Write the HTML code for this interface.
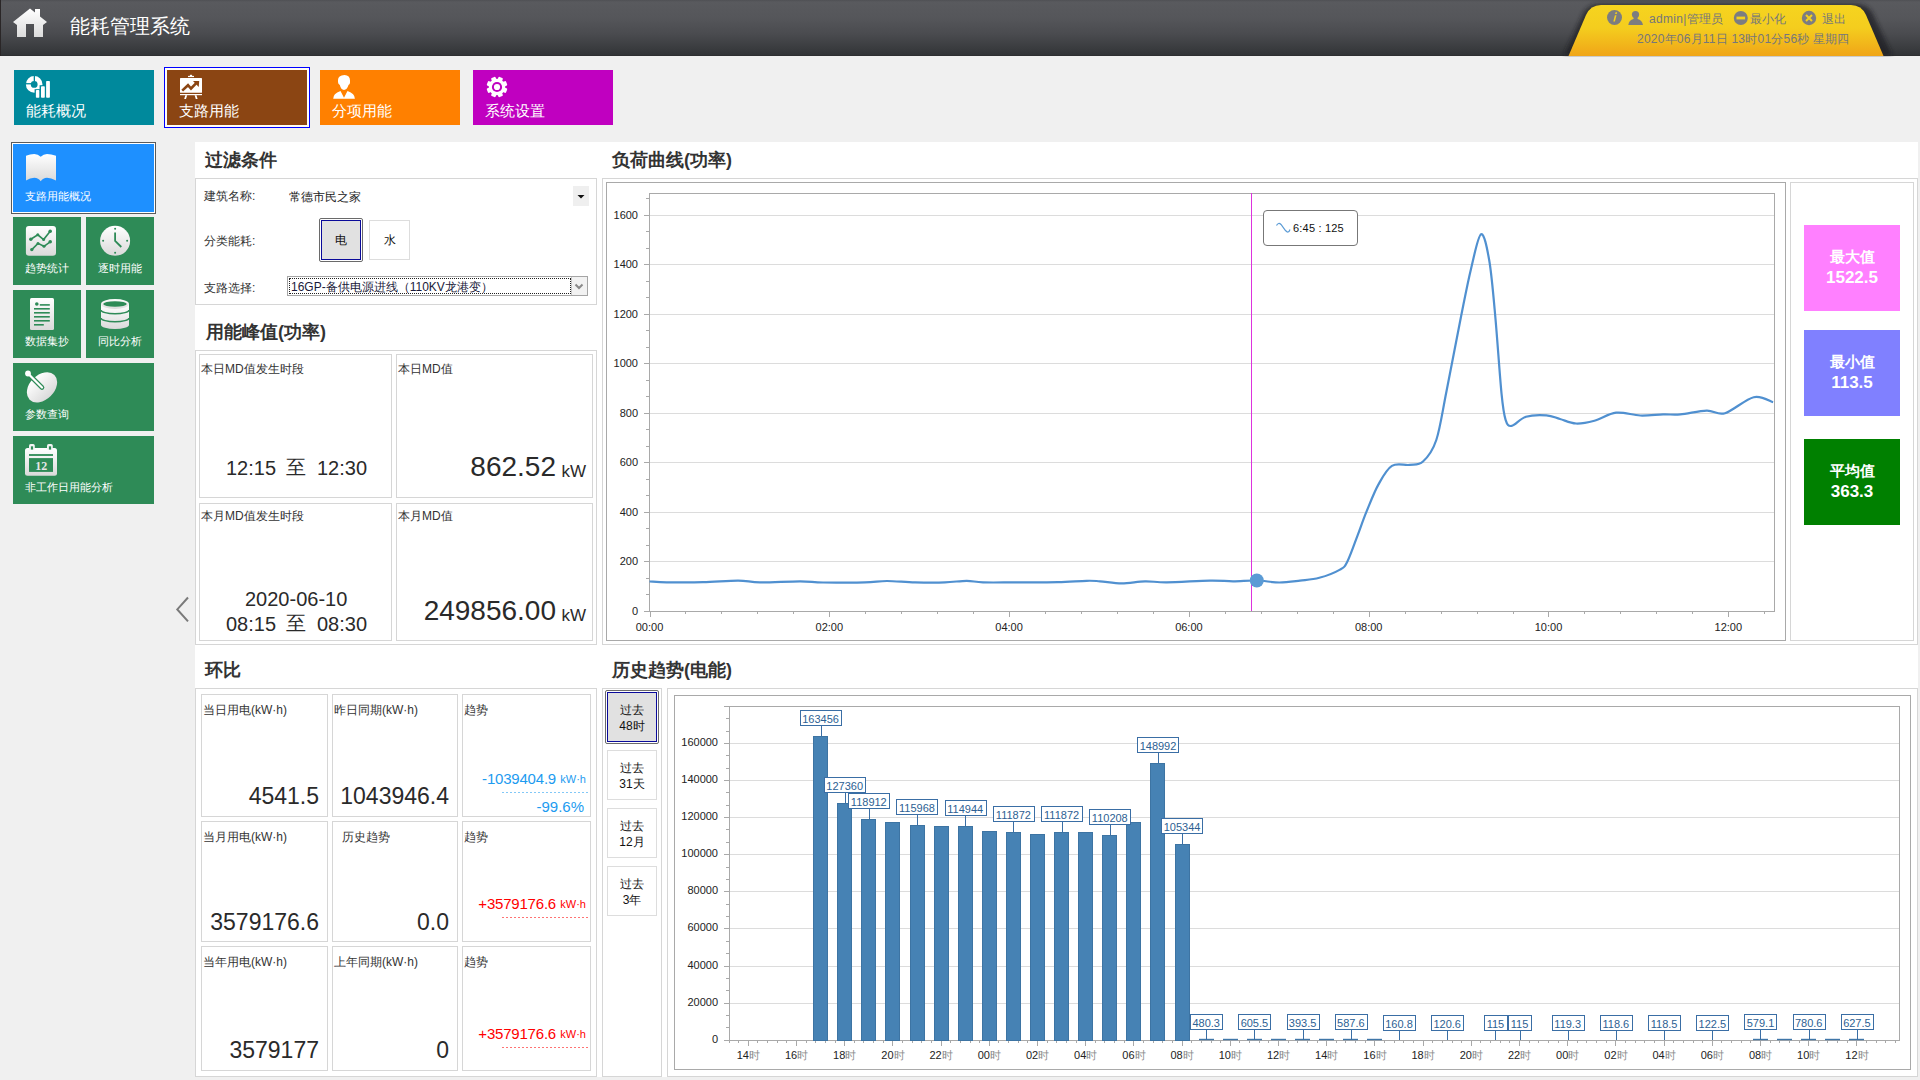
<!DOCTYPE html>
<html><head><meta charset="utf-8"><title>能耗管理系统</title>
<style>
html,body{margin:0;padding:0;}
body{width:1920px;height:1080px;overflow:hidden;position:relative;background:#f0f0f0;font-family:"Liberation Sans", sans-serif;}
svg text{font-family:"Liberation Sans", sans-serif;}
</style></head><body>
<div style="position:absolute;left:0px;top:0px;width:1920px;height:55px;background:linear-gradient(#4f5054 0px,#595a5e 2px,#55565a 18px,#4a4b4f 34px,#3a3c3f 48px,#323437 55px);"></div><div style="position:absolute;left:0px;top:55px;width:1920px;height:1px;background:#2e2f31;"></div><div style="position:absolute;left:0px;top:0px;width:1px;height:56px;background:#2a2627;"></div><svg style="position:absolute;left:0;top:0" width="60" height="50">
<defs><linearGradient id="hg" x1="0" y1="0" x2="0" y2="1"><stop offset="0" stop-color="#ffffff"/><stop offset="1" stop-color="#dcdcdc"/></linearGradient></defs>
<path d="M13,22 L30,8.5 L35,12.5 L35,9 L40,9 L40,16.5 L47,22 L43,25 L43,37 L34,37 L34,24 L26,24 L26,37 L17,37 L17,25 Z" fill="url(#hg)"/>
</svg><div style="position:absolute;left:70px;top:16px;font-size:20px;line-height:20px;color:#ffffff;font-weight:normal;white-space:nowrap;">能耗管理系统</div><svg style="position:absolute;left:1540px;top:0" width="380" height="57">
<defs><linearGradient id="yg" x1="0" y1="0" x2="0" y2="1"><stop offset="0" stop-color="#f6d41f"/><stop offset="0.45" stop-color="#f4cd1e"/><stop offset="1" stop-color="#f0a518"/></linearGradient>
<filter id="ysh" x="-10%" y="-20%" width="120%" height="140%"><feGaussianBlur stdDeviation="2"/></filter></defs>
<path d="M24,55 L43,14 Q48,4 60,4 L316,4 Q328,4 333,14 L352,55 Z" fill="#1e1f22" opacity="0.7" filter="url(#ysh)"/>
<path d="M28.5,56 L46,15 Q50.5,5 61,5 L311,5 Q321.5,5 326,15 L343.5,56 Z" fill="url(#yg)"/>
</svg><svg style="position:absolute;left:1600px;top:5px" width="260" height="25">
<circle cx="14.5" cy="12.5" r="7.5" fill="#7c7d80"/>
<path d="M15.6,7.2 l1.6,0 l-0.5,1.8 l-1.6,0 z M14.9,10.2 l1.6,0 l-1.6,6.4 l-1.6,0 z" fill="#f3d01e"/>
<circle cx="35.5" cy="9.5" r="3.6" fill="#7c7d80"/>
<path d="M28.3,20 Q29,15 33.5,14 L37.5,14 Q42,15 43,20 Z" fill="#7c7d80"/>
<rect x="33.6" y="11" width="4" height="4" fill="#7c7d80"/>
<circle cx="140.8" cy="13" r="7" fill="#7c7d80"/>
<rect x="136.5" y="11.6" width="8.6" height="2.8" fill="#f3d01e"/>
<circle cx="209" cy="13" r="7.2" fill="#7c7d80"/>
<path d="M206,10 L212,16 M212,10 L206,16" stroke="#f3d01e" stroke-width="2"/>
</svg><div style="position:absolute;left:1649px;top:13px;font-size:12px;line-height:12px;color:#76777b;font-weight:normal;white-space:nowrap;letter-spacing:0.3px">admin|管理员</div><div style="position:absolute;left:1750px;top:13px;font-size:12px;line-height:12px;color:#76777b;font-weight:normal;white-space:nowrap;">最小化</div><div style="position:absolute;left:1822px;top:13px;font-size:12px;line-height:12px;color:#76777b;font-weight:normal;white-space:nowrap;">退出</div><div style="position:absolute;left:1637px;top:33px;font-size:12px;line-height:12px;color:#76777b;font-weight:normal;white-space:nowrap;letter-spacing:0.22px">2020年06月11日 13时01分56秒 星期四</div><div style="position:absolute;left:14px;top:70px;width:140px;height:55px;background:#00899c;"></div><svg style="position:absolute;left:14px;top:70px" width="60" height="32">
<circle cx="20.2" cy="14.4" r="5.85" fill="none" stroke="#fff" stroke-width="4.9"/>
<rect x="19.7" y="5" width="1.3" height="6.5" fill="#00899c"/>
<rect x="11" y="13.1" width="6.6" height="1.3" fill="#00899c"/>
<rect x="20.6" y="19.2" width="5.6" height="9" fill="#00899c"/>
<rect x="21.9" y="20.1" width="3.6" height="7.6" rx="0.8" fill="#fff"/>
<rect x="25.6" y="15.2" width="5.6" height="13" fill="#00899c"/>
<rect x="27" y="16.3" width="3.8" height="11.4" rx="0.8" fill="#fff"/>
<rect x="32.1" y="11" width="3.8" height="16.7" rx="0.8" fill="#fff"/>
</svg><div style="position:absolute;left:26px;top:103px;font-size:15px;line-height:15px;color:#ffffff;font-weight:normal;white-space:nowrap;">能耗概况</div><div style="position:absolute;left:164px;top:67px;width:144px;height:59px;border:1px solid #0000ff;box-sizing:content-box;background:#fffdf6;"></div><div style="position:absolute;left:167px;top:70px;width:140px;height:55px;background:#8b4513;"></div><svg style="position:absolute;left:167px;top:70px" width="60" height="32">
<rect x="21" y="5.9" width="6" height="1.2" fill="#fff"/>
<rect x="22.9" y="4.8" width="2.2" height="1.3" fill="#fff"/>
<rect x="13" y="8" width="22" height="14.8" rx="0.6" fill="#fff"/>
<path d="M15.2,20.6 L21,15.2 L24,18.5 L29.5,12.8" stroke="#8b4513" stroke-width="2.6" fill="none"/>
<path d="M26,11 L32.2,10.9 L31.7,17 Z" fill="#8b4513"/>
<rect x="13" y="24" width="22" height="1.2" fill="#fff"/>
<path d="M18.3,25.2 L20.2,25.2 L19,28.9 L17.2,28.9 Z M27.6,25.2 L29.5,25.2 L30.6,28.9 L28.8,28.9 Z" fill="#fff"/>
</svg><div style="position:absolute;left:179px;top:103px;font-size:15px;line-height:15px;color:#ffffff;font-weight:normal;white-space:nowrap;">支路用能</div><div style="position:absolute;left:320px;top:70px;width:140px;height:55px;background:#ff8000;"></div><svg style="position:absolute;left:320px;top:70px" width="60" height="32">
<path d="M24.5,4.9 Q30,5 30,10.5 L30,12.5 Q30,14 28.5,15 Q27,19.9 24,19.9 Q21,19.9 19.8,15 Q18,14 18,12 L18,10 Q18,5.5 24.5,4.9 Z" fill="#fff"/>
<path d="M13.2,28.8 Q13,23.5 20.5,20.9 L24,27.8 L27.5,20.9 Q35,23.5 34.9,28.8 Z" fill="#fff"/>
</svg><div style="position:absolute;left:332px;top:103px;font-size:15px;line-height:15px;color:#ffffff;font-weight:normal;white-space:nowrap;">分项用能</div><div style="position:absolute;left:473px;top:70px;width:140px;height:55px;background:#c000c0;"></div><svg style="position:absolute;left:473px;top:70px" width="60" height="32">
<g transform="translate(24,17)">
<circle r="8.3" fill="#fff"/>
<g fill="#fff"><rect x="-2.4" y="-10.4" width="4.8" height="4" rx="1.1" transform="rotate(22.5)"/><rect x="-2.4" y="-10.4" width="4.8" height="4" rx="1.1" transform="rotate(67.5)"/><rect x="-2.4" y="-10.4" width="4.8" height="4" rx="1.1" transform="rotate(112.5)"/><rect x="-2.4" y="-10.4" width="4.8" height="4" rx="1.1" transform="rotate(157.5)"/><rect x="-2.4" y="-10.4" width="4.8" height="4" rx="1.1" transform="rotate(202.5)"/><rect x="-2.4" y="-10.4" width="4.8" height="4" rx="1.1" transform="rotate(247.5)"/><rect x="-2.4" y="-10.4" width="4.8" height="4" rx="1.1" transform="rotate(292.5)"/><rect x="-2.4" y="-10.4" width="4.8" height="4" rx="1.1" transform="rotate(337.5)"/></g>
<circle r="5.1" fill="#c000c0"/>
<circle r="3.1" fill="#fff"/>
</g>
</svg><div style="position:absolute;left:485px;top:103px;font-size:15px;line-height:15px;color:#ffffff;font-weight:normal;white-space:nowrap;">系统设置</div><div style="position:absolute;left:11px;top:142px;width:143px;height:70px;border:1px solid #5a5a5a;box-sizing:border-box;width:145px;height:72px;background:#fff;"></div><div style="position:absolute;left:13px;top:144px;width:141px;height:68px;background:#1e90ff;"></div><svg style="position:absolute;left:13px;top:144px" width="60" height="45">
<defs><linearGradient id="wg" x1="0" y1="0" x2="0" y2="1"><stop offset="0" stop-color="#ffffff"/><stop offset="1" stop-color="#dadada"/></linearGradient></defs>
<path d="M13,11.8 Q17,10 21.3,10 Q25,10 27.7,12.8 Q30.5,10 34,10 Q38,10 43,11.8 L43,36.4 Q38,33.8 34,33.8 Q30,33.8 27.7,37.3 Q25.5,33.8 21.3,33.8 Q17,33.8 13,36.4 Z" fill="url(#wg)"/>
</svg><div style="position:absolute;left:25px;top:191px;font-size:11px;line-height:11px;color:#ffffff;font-weight:normal;white-space:nowrap;">支路用能概况</div><div style="position:absolute;left:13px;top:217px;width:68px;height:68px;background:#2e8b57;"></div><svg style="position:absolute;left:13px;top:217px" width="60" height="45">
<rect x="12.9" y="8.9" width="30.1" height="29.9" rx="3" fill="url(#wg)"/>
<g stroke="#2e8b57" stroke-width="1.6" fill="none"><path d="M17.8,22.2 L24.8,17.8 L30.6,22.6 L37.2,14.2"/><path d="M18.8,32.6 L25,26.4 L31,29.3 L37.2,24.8"/></g>
<g fill="#2e8b57"><circle cx="17.8" cy="22.2" r="1.7"/><circle cx="24.8" cy="17.8" r="1.5"/><circle cx="30.6" cy="22.6" r="1.5"/><circle cx="37.2" cy="14.2" r="1.8"/><circle cx="18.8" cy="32.6" r="1.7"/><circle cx="25" cy="26.4" r="1.5"/><circle cx="31" cy="29.3" r="1.5"/><circle cx="37.2" cy="24.8" r="1.8"/></g>
</svg><div style="position:absolute;left:25px;top:263px;font-size:11px;line-height:11px;color:#ffffff;font-weight:normal;white-space:nowrap;">趋势统计</div><div style="position:absolute;left:86px;top:217px;width:68px;height:68px;background:#2e8b57;"></div><svg style="position:absolute;left:86px;top:217px" width="60" height="45">
<circle cx="29.1" cy="23.8" r="15" fill="url(#wg)"/>
<g fill="#2e8b57"><circle cx="29.1" cy="11.8" r="1"/><circle cx="29.1" cy="35.8" r="1"/><circle cx="17.1" cy="23.8" r="1"/><circle cx="41.1" cy="23.8" r="1"/></g>
<path d="M29.1,15.4 L29.1,23.9 L35.3,30" stroke="#2e8b57" stroke-width="1.8" fill="none"/>
</svg><div style="position:absolute;left:98px;top:263px;font-size:11px;line-height:11px;color:#ffffff;font-weight:normal;white-space:nowrap;">逐时用能</div><div style="position:absolute;left:13px;top:290px;width:68px;height:68px;background:#2e8b57;"></div><svg style="position:absolute;left:13px;top:290px" width="60" height="45">
<rect x="17" y="8" width="24" height="32" rx="1.5" fill="url(#wg)"/>
<circle cx="23.8" cy="14" r="1.8" fill="#2e8b57"/>
<g fill="#2e8b57"><rect x="26.8" y="14.1" width="10" height="1.6"/><rect x="21" y="18" width="15.8" height="1.6"/><rect x="21" y="22" width="15.8" height="1.6"/><rect x="21" y="26" width="15.8" height="1.6"/><rect x="21" y="30" width="15.8" height="1.6"/><rect x="21" y="34" width="9.8" height="1.6"/></g>
</svg><div style="position:absolute;left:25px;top:336px;font-size:11px;line-height:11px;color:#ffffff;font-weight:normal;white-space:nowrap;">数据集抄</div><div style="position:absolute;left:86px;top:290px;width:68px;height:68px;background:#2e8b57;"></div><svg style="position:absolute;left:86px;top:290px" width="60" height="45">
<path d="M15,14 L15,34.9 A14,4 0 0 0 43,34.9 L43,14 Z" fill="url(#wg)"/>
<ellipse cx="29" cy="14" rx="14" ry="5" fill="url(#wg)"/>
<ellipse cx="29" cy="14" rx="11.8" ry="2.8" fill="#2e8b57"/>
<path d="M15,19.9 A14,3.9 0 0 0 43,19.9 M15,27.9 A14,3.9 0 0 0 43,27.9" stroke="#2e8b57" stroke-width="1.4" fill="none"/>
</svg><div style="position:absolute;left:98px;top:336px;font-size:11px;line-height:11px;color:#ffffff;font-weight:normal;white-space:nowrap;">同比分析</div><div style="position:absolute;left:13px;top:363px;width:141px;height:68px;background:#2e8b57;"></div><svg style="position:absolute;left:13px;top:363px" width="60" height="45">
<ellipse cx="29" cy="24.3" rx="17.5" ry="12.3" transform="rotate(-45 29 24.3)" fill="url(#wg)"/>
<path d="M15.5,11 L29,24.5" stroke="#2e8b57" stroke-width="4.6" stroke-linecap="round"/>
<path d="M15.5,11 L29,24.5" stroke="#ffffff" stroke-width="2.2" stroke-linecap="round"/>
<circle cx="15" cy="10.5" r="2.9" fill="#fff"/>
</svg><div style="position:absolute;left:25px;top:409px;font-size:11px;line-height:11px;color:#ffffff;font-weight:normal;white-space:nowrap;">参数查询</div><div style="position:absolute;left:13px;top:436px;width:141px;height:68px;background:#2e8b57;"></div><svg style="position:absolute;left:13px;top:436px" width="60" height="45">
<rect x="12" y="12" width="32" height="27.8" rx="2.5" fill="url(#wg)"/>
<rect x="16" y="18.1" width="24" height="1.8" fill="#2e8b57"/>
<rect x="16" y="22.1" width="24" height="13.8" fill="#2e8b57"/>
<rect x="16" y="8.1" width="5.8" height="6" rx="1.6" fill="#f4f4f4"/>
<rect x="17.9" y="10.3" width="2.2" height="3.3" fill="#2e8b57"/>
<rect x="34" y="8.1" width="5.8" height="6" rx="1.6" fill="#f4f4f4"/>
<rect x="35.9" y="10.3" width="2.2" height="3.3" fill="#2e8b57"/>
<text x="28.2" y="33.8" font-size="12" font-weight="bold" fill="#e6e6e6" text-anchor="middle" style="font-family:'Liberation Serif',serif">12</text>
</svg><div style="position:absolute;left:25px;top:482px;font-size:11px;line-height:11px;color:#ffffff;font-weight:normal;white-space:nowrap;">非工作日用能分析</div><svg style="position:absolute;left:170px;top:590px" width="25" height="40">
<path d="M18,7.5 L7.3,19.4 L18,31.4" stroke="#7a7a7a" stroke-width="2" fill="none"/>
</svg><div style="position:absolute;left:195px;top:142px;width:1723px;height:935px;background:#ffffff;"></div><div style="position:absolute;left:205px;top:151px;font-size:18px;line-height:18px;color:#333333;font-weight:bold;white-space:nowrap;">过滤条件</div><div style="position:absolute;left:206px;top:323px;font-size:18px;line-height:18px;color:#333333;font-weight:bold;white-space:nowrap;">用能峰值(功率)</div><div style="position:absolute;left:205px;top:661px;font-size:18px;line-height:18px;color:#333333;font-weight:bold;white-space:nowrap;">环比</div><div style="position:absolute;left:612px;top:151px;font-size:18px;line-height:18px;color:#333333;font-weight:bold;white-space:nowrap;">负荷曲线(功率)</div><div style="position:absolute;left:612px;top:661px;font-size:18px;line-height:18px;color:#333333;font-weight:bold;white-space:nowrap;">历史趋势(电能)</div><div style="position:absolute;left:195px;top:178px;width:402px;height:127px;box-sizing:border-box;border:1px solid #d6d6d6;"></div><div style="position:absolute;left:204px;top:190px;font-size:12px;line-height:12px;color:#333;font-weight:normal;white-space:nowrap;">建筑名称:</div><div style="position:absolute;left:289px;top:191px;font-size:12px;line-height:12px;color:#222;font-weight:normal;white-space:nowrap;">常德市民之家</div><div style="position:absolute;left:573px;top:186px;width:16px;height:20px;background:#efefef;"></div><svg style="position:absolute;left:573px;top:186px" width="16" height="20"><path d="M4.5,9 L11.5,9 L8,12.5 Z" fill="#111"/></svg><div style="position:absolute;left:204px;top:235px;font-size:12px;line-height:12px;color:#333;font-weight:normal;white-space:nowrap;">分类能耗:</div><div style="position:absolute;left:319px;top:218px;width:44px;height:44px;box-sizing:border-box;border:1px solid #6a6a6a;border-radius:2px;background:#fff;"></div><div style="position:absolute;left:321px;top:220px;width:40px;height:40px;box-sizing:border-box;border:1px solid #0a0a9a;background:#e1e1e1;"></div><div style="position:absolute;left:321.0px;top:234px;width:40px;font-size:12px;line-height:12px;color:#111;font-weight:normal;white-space:nowrap;text-align:center;">电</div><div style="position:absolute;left:369px;top:220px;width:41px;height:40px;box-sizing:border-box;border:1px solid #dddddd;background:#fff;"></div><div style="position:absolute;left:369.5px;top:234px;width:40px;font-size:12px;line-height:12px;color:#111;font-weight:normal;white-space:nowrap;text-align:center;">水</div><div style="position:absolute;left:204px;top:282px;font-size:12px;line-height:12px;color:#333;font-weight:normal;white-space:nowrap;">支路选择:</div><div style="position:absolute;left:287px;top:276px;width:301px;height:20px;box-sizing:border-box;border:1px solid #a5a5a5;background:#fff;"></div><div style="position:absolute;left:289px;top:278px;width:282px;height:16px;box-sizing:border-box;border:1px dotted #222;"></div><div style="position:absolute;left:571px;top:277px;width:16px;height:18px;box-sizing:border-box;border-left:1px solid #c8c8c8;background:#f2f2f2;"></div><svg style="position:absolute;left:571px;top:277px" width="16" height="18"><path d="M4.5,7.5 L8,11 L11.5,7.5" stroke="#8a8a8a" stroke-width="2" fill="none"/></svg><div style="position:absolute;left:291px;top:281px;font-size:12px;line-height:12px;color:#1a1a3a;font-weight:normal;white-space:nowrap;">16GP-备供电源进线（110KV龙港变）</div><div style="position:absolute;left:195px;top:350px;width:402px;height:295px;box-sizing:border-box;border:1px solid #d6d6d6;"></div><div style="position:absolute;left:199px;top:354px;width:193px;height:144px;box-sizing:border-box;border:1px solid #d6d6d6;"></div><div style="position:absolute;left:396px;top:354px;width:197px;height:144px;box-sizing:border-box;border:1px solid #d6d6d6;"></div><div style="position:absolute;left:199px;top:503px;width:193px;height:138px;box-sizing:border-box;border:1px solid #d6d6d6;"></div><div style="position:absolute;left:396px;top:503px;width:197px;height:138px;box-sizing:border-box;border:1px solid #d6d6d6;"></div><div style="position:absolute;left:201px;top:363px;font-size:12px;line-height:12px;color:#333;font-weight:normal;white-space:nowrap;">本日MD值发生时段</div><div style="position:absolute;left:398px;top:363px;font-size:12px;line-height:12px;color:#333;font-weight:normal;white-space:nowrap;">本日MD值</div><div style="position:absolute;left:201px;top:510px;font-size:12px;line-height:12px;color:#333;font-weight:normal;white-space:nowrap;">本月MD值发生时段</div><div style="position:absolute;left:398px;top:510px;font-size:12px;line-height:12px;color:#333;font-weight:normal;white-space:nowrap;">本月MD值</div><div style="position:absolute;left:226px;top:458px;font-size:20px;line-height:20px;color:#2a2a2a;font-weight:normal;white-space:nowrap;">12:15</div><div style="position:absolute;left:286px;top:457px;font-size:20px;line-height:20px;color:#2a2a2a;font-weight:normal;white-space:nowrap;">至</div><div style="position:absolute;left:317px;top:458px;font-size:20px;line-height:20px;color:#2a2a2a;font-weight:normal;white-space:nowrap;">12:30</div><div style="position:absolute;left:245px;top:589px;font-size:20px;line-height:20px;color:#2a2a2a;font-weight:normal;white-space:nowrap;">2020-06-10</div><div style="position:absolute;left:226px;top:614px;font-size:20px;line-height:20px;color:#2a2a2a;font-weight:normal;white-space:nowrap;">08:15</div><div style="position:absolute;left:286px;top:613px;font-size:20px;line-height:20px;color:#2a2a2a;font-weight:normal;white-space:nowrap;">至</div><div style="position:absolute;left:317px;top:614px;font-size:20px;line-height:20px;color:#2a2a2a;font-weight:normal;white-space:nowrap;">08:30</div><div style="position:absolute;right:1364px;top:453px;font-size:28px;line-height:28px;color:#2a2a2a;font-weight:normal;white-space:nowrap;text-align:right;">862.52</div><div style="position:absolute;right:1334px;top:463px;font-size:17px;line-height:17px;color:#2a2a2a;font-weight:normal;white-space:nowrap;text-align:right;">kW</div><div style="position:absolute;right:1364px;top:597px;font-size:28px;line-height:28px;color:#2a2a2a;font-weight:normal;white-space:nowrap;text-align:right;">249856.00</div><div style="position:absolute;right:1334px;top:607px;font-size:17px;line-height:17px;color:#2a2a2a;font-weight:normal;white-space:nowrap;text-align:right;">kW</div><div style="position:absolute;left:195px;top:688px;width:402px;height:389px;box-sizing:border-box;border:1px solid #d6d6d6;"></div><div style="position:absolute;left:201px;top:694px;width:127px;height:123px;box-sizing:border-box;border:1px solid #d6d6d6;"></div><div style="position:absolute;left:332px;top:694px;width:126px;height:123px;box-sizing:border-box;border:1px solid #d6d6d6;"></div><div style="position:absolute;left:462px;top:694px;width:129px;height:123px;box-sizing:border-box;border:1px solid #d6d6d6;"></div><div style="position:absolute;left:201px;top:821px;width:127px;height:121px;box-sizing:border-box;border:1px solid #d6d6d6;"></div><div style="position:absolute;left:332px;top:821px;width:126px;height:121px;box-sizing:border-box;border:1px solid #d6d6d6;"></div><div style="position:absolute;left:462px;top:821px;width:129px;height:121px;box-sizing:border-box;border:1px solid #d6d6d6;"></div><div style="position:absolute;left:201px;top:946px;width:127px;height:125px;box-sizing:border-box;border:1px solid #d6d6d6;"></div><div style="position:absolute;left:332px;top:946px;width:126px;height:125px;box-sizing:border-box;border:1px solid #d6d6d6;"></div><div style="position:absolute;left:462px;top:946px;width:129px;height:125px;box-sizing:border-box;border:1px solid #d6d6d6;"></div><div style="position:absolute;left:203px;top:704px;font-size:12px;line-height:12px;color:#333;font-weight:normal;white-space:nowrap;">当日用电(kW·h)</div><div style="position:absolute;left:334px;top:704px;font-size:12px;line-height:12px;color:#333;font-weight:normal;white-space:nowrap;">昨日同期(kW·h)</div><div style="position:absolute;left:464px;top:704px;font-size:12px;line-height:12px;color:#333;font-weight:normal;white-space:nowrap;">趋势</div><div style="position:absolute;left:203px;top:831px;font-size:12px;line-height:12px;color:#333;font-weight:normal;white-space:nowrap;">当月用电(kW·h)</div><div style="position:absolute;left:342px;top:831px;font-size:12px;line-height:12px;color:#333;font-weight:normal;white-space:nowrap;">历史趋势</div><div style="position:absolute;left:464px;top:831px;font-size:12px;line-height:12px;color:#333;font-weight:normal;white-space:nowrap;">趋势</div><div style="position:absolute;left:203px;top:956px;font-size:12px;line-height:12px;color:#333;font-weight:normal;white-space:nowrap;">当年用电(kW·h)</div><div style="position:absolute;left:334px;top:956px;font-size:12px;line-height:12px;color:#333;font-weight:normal;white-space:nowrap;">上年同期(kW·h)</div><div style="position:absolute;left:464px;top:956px;font-size:12px;line-height:12px;color:#333;font-weight:normal;white-space:nowrap;">趋势</div><div style="position:absolute;right:1601px;top:785px;font-size:23px;line-height:23px;color:#2a2a2a;font-weight:normal;white-space:nowrap;text-align:right;">4541.5</div><div style="position:absolute;right:1471px;top:785px;font-size:23px;line-height:23px;color:#2a2a2a;font-weight:normal;white-space:nowrap;text-align:right;">1043946.4</div><div style="position:absolute;right:1601px;top:911px;font-size:23px;line-height:23px;color:#2a2a2a;font-weight:normal;white-space:nowrap;text-align:right;">3579176.6</div><div style="position:absolute;right:1471px;top:911px;font-size:23px;line-height:23px;color:#2a2a2a;font-weight:normal;white-space:nowrap;text-align:right;">0.0</div><div style="position:absolute;right:1601px;top:1039px;font-size:23px;line-height:23px;color:#2a2a2a;font-weight:normal;white-space:nowrap;text-align:right;">3579177</div><div style="position:absolute;right:1471px;top:1039px;font-size:23px;line-height:23px;color:#2a2a2a;font-weight:normal;white-space:nowrap;text-align:right;">0</div><div style="position:absolute;right:1364px;top:771px;font-size:15px;line-height:15px;color:#1d9bf0;font-weight:normal;white-space:nowrap;text-align:right;letter-spacing:-0.2px">-1039404.9</div><div style="position:absolute;right:1334px;top:774px;font-size:11px;line-height:11px;color:#1d9bf0;font-weight:normal;white-space:nowrap;text-align:right;">kW·h</div><div style="position:absolute;left:502px;top:792px;width:87px;height:1px;background:repeating-linear-gradient(90deg,#1d9bf0 0 2px,transparent 2px 4px);opacity:0.55"></div><div style="position:absolute;right:1336px;top:799px;font-size:15px;line-height:15px;color:#1d9bf0;font-weight:normal;white-space:nowrap;text-align:right;">-99.6%</div><div style="position:absolute;right:1364px;top:896px;font-size:15px;line-height:15px;color:#ff0000;font-weight:normal;white-space:nowrap;text-align:right;letter-spacing:-0.2px">+3579176.6</div><div style="position:absolute;right:1334px;top:899px;font-size:11px;line-height:11px;color:#ff0000;font-weight:normal;white-space:nowrap;text-align:right;">kW·h</div><div style="position:absolute;left:502px;top:917px;width:87px;height:1px;background:repeating-linear-gradient(90deg,#ff0000 0 2px,transparent 2px 4px);opacity:0.55"></div><div style="position:absolute;right:1364px;top:1026px;font-size:15px;line-height:15px;color:#ff0000;font-weight:normal;white-space:nowrap;text-align:right;letter-spacing:-0.2px">+3579176.6</div><div style="position:absolute;right:1334px;top:1029px;font-size:11px;line-height:11px;color:#ff0000;font-weight:normal;white-space:nowrap;text-align:right;">kW·h</div><div style="position:absolute;left:502px;top:1047px;width:87px;height:1px;background:repeating-linear-gradient(90deg,#ff0000 0 2px,transparent 2px 4px);opacity:0.55"></div><div style="position:absolute;left:602px;top:688px;width:60px;height:389px;box-sizing:border-box;border:1px solid #d6d6d6;"></div><div style="position:absolute;left:605px;top:690px;width:54px;height:54px;box-sizing:border-box;border:1px solid #6a6a6a;border-radius:2px;background:#fff;"></div><div style="position:absolute;left:607px;top:692px;width:50px;height:50px;box-sizing:border-box;border:1px solid #0a0a9a;background:#e1e1e1;"></div><div style="position:absolute;left:607px;top:702px;width:50px;text-align:center;font-size:12px;line-height:16px;color:#111;">过去<br>48时</div><div style="position:absolute;left:607px;top:750px;width:50px;height:50px;box-sizing:border-box;border:1px solid #dddddd;background:#fff;"></div><div style="position:absolute;left:607px;top:760px;width:50px;text-align:center;font-size:12px;line-height:16px;color:#111;">过去<br>31天</div><div style="position:absolute;left:607px;top:808px;width:50px;height:50px;box-sizing:border-box;border:1px solid #dddddd;background:#fff;"></div><div style="position:absolute;left:607px;top:818px;width:50px;text-align:center;font-size:12px;line-height:16px;color:#111;">过去<br>12月</div><div style="position:absolute;left:607px;top:866px;width:50px;height:50px;box-sizing:border-box;border:1px solid #dddddd;background:#fff;"></div><div style="position:absolute;left:607px;top:876px;width:50px;text-align:center;font-size:12px;line-height:16px;color:#111;">过去<br>3年</div><div style="position:absolute;left:602px;top:178px;width:1316px;height:467px;box-sizing:border-box;border:1px solid #d6d6d6;"></div><div style="position:absolute;left:606px;top:182px;width:1180px;height:459px;box-sizing:border-box;border:1px solid #a9a9a9;"></div><div style="position:absolute;left:1790px;top:182px;width:124px;height:459px;box-sizing:border-box;border:1px solid #d6d6d6;"></div><svg style="position:absolute;left:0;top:0" width="1920" height="1080" shape-rendering="crispEdges"><line x1="650" y1="561.5" x2="1774" y2="561.5" stroke="#dcdcdc" stroke-width="1"/><line x1="650" y1="512.5" x2="1774" y2="512.5" stroke="#dcdcdc" stroke-width="1"/><line x1="650" y1="462.5" x2="1774" y2="462.5" stroke="#dcdcdc" stroke-width="1"/><line x1="650" y1="413.5" x2="1774" y2="413.5" stroke="#dcdcdc" stroke-width="1"/><line x1="650" y1="363.5" x2="1774" y2="363.5" stroke="#dcdcdc" stroke-width="1"/><line x1="650" y1="314.5" x2="1774" y2="314.5" stroke="#dcdcdc" stroke-width="1"/><line x1="650" y1="264.5" x2="1774" y2="264.5" stroke="#dcdcdc" stroke-width="1"/><line x1="650" y1="215.5" x2="1774" y2="215.5" stroke="#dcdcdc" stroke-width="1"/><rect x="649.5" y="193.5" width="1125" height="418" fill="none" stroke="#a9a9a9" stroke-width="1"/><line x1="644" y1="611.5" x2="649" y2="611.5" stroke="#a9a9a9"/><line x1="646" y1="594.5" x2="649" y2="594.5" stroke="#a9a9a9"/><line x1="646" y1="578.5" x2="649" y2="578.5" stroke="#a9a9a9"/><line x1="644" y1="561.5" x2="649" y2="561.5" stroke="#a9a9a9"/><line x1="646" y1="545.5" x2="649" y2="545.5" stroke="#a9a9a9"/><line x1="646" y1="528.5" x2="649" y2="528.5" stroke="#a9a9a9"/><line x1="644" y1="512.5" x2="649" y2="512.5" stroke="#a9a9a9"/><line x1="646" y1="495.5" x2="649" y2="495.5" stroke="#a9a9a9"/><line x1="646" y1="479.5" x2="649" y2="479.5" stroke="#a9a9a9"/><line x1="644" y1="462.5" x2="649" y2="462.5" stroke="#a9a9a9"/><line x1="646" y1="446.5" x2="649" y2="446.5" stroke="#a9a9a9"/><line x1="646" y1="429.5" x2="649" y2="429.5" stroke="#a9a9a9"/><line x1="644" y1="413.5" x2="649" y2="413.5" stroke="#a9a9a9"/><line x1="646" y1="396.5" x2="649" y2="396.5" stroke="#a9a9a9"/><line x1="646" y1="380.5" x2="649" y2="380.5" stroke="#a9a9a9"/><line x1="644" y1="363.5" x2="649" y2="363.5" stroke="#a9a9a9"/><line x1="646" y1="347.5" x2="649" y2="347.5" stroke="#a9a9a9"/><line x1="646" y1="330.5" x2="649" y2="330.5" stroke="#a9a9a9"/><line x1="644" y1="314.5" x2="649" y2="314.5" stroke="#a9a9a9"/><line x1="646" y1="297.5" x2="649" y2="297.5" stroke="#a9a9a9"/><line x1="646" y1="281.5" x2="649" y2="281.5" stroke="#a9a9a9"/><line x1="644" y1="264.5" x2="649" y2="264.5" stroke="#a9a9a9"/><line x1="646" y1="248.5" x2="649" y2="248.5" stroke="#a9a9a9"/><line x1="646" y1="231.5" x2="649" y2="231.5" stroke="#a9a9a9"/><line x1="644" y1="215.5" x2="649" y2="215.5" stroke="#a9a9a9"/><line x1="646" y1="198.5" x2="649" y2="198.5" stroke="#a9a9a9"/><line x1="650.5" y1="611" x2="650.5" y2="617" stroke="#a9a9a9"/><line x1="685.5" y1="611" x2="685.5" y2="614" stroke="#a9a9a9"/><line x1="721.5" y1="611" x2="721.5" y2="614" stroke="#a9a9a9"/><line x1="757.5" y1="611" x2="757.5" y2="614" stroke="#a9a9a9"/><line x1="793.5" y1="611" x2="793.5" y2="614" stroke="#a9a9a9"/><line x1="829.5" y1="611" x2="829.5" y2="617" stroke="#a9a9a9"/><line x1="865.5" y1="611" x2="865.5" y2="614" stroke="#a9a9a9"/><line x1="901.5" y1="611" x2="901.5" y2="614" stroke="#a9a9a9"/><line x1="937.5" y1="611" x2="937.5" y2="614" stroke="#a9a9a9"/><line x1="973.5" y1="611" x2="973.5" y2="614" stroke="#a9a9a9"/><line x1="1009.5" y1="611" x2="1009.5" y2="617" stroke="#a9a9a9"/><line x1="1045.5" y1="611" x2="1045.5" y2="614" stroke="#a9a9a9"/><line x1="1081.5" y1="611" x2="1081.5" y2="614" stroke="#a9a9a9"/><line x1="1117.5" y1="611" x2="1117.5" y2="614" stroke="#a9a9a9"/><line x1="1153.5" y1="611" x2="1153.5" y2="614" stroke="#a9a9a9"/><line x1="1189.5" y1="611" x2="1189.5" y2="617" stroke="#a9a9a9"/><line x1="1225.5" y1="611" x2="1225.5" y2="614" stroke="#a9a9a9"/><line x1="1261.5" y1="611" x2="1261.5" y2="614" stroke="#a9a9a9"/><line x1="1297.5" y1="611" x2="1297.5" y2="614" stroke="#a9a9a9"/><line x1="1333.5" y1="611" x2="1333.5" y2="614" stroke="#a9a9a9"/><line x1="1369.5" y1="611" x2="1369.5" y2="617" stroke="#a9a9a9"/><line x1="1405.5" y1="611" x2="1405.5" y2="614" stroke="#a9a9a9"/><line x1="1441.5" y1="611" x2="1441.5" y2="614" stroke="#a9a9a9"/><line x1="1477.5" y1="611" x2="1477.5" y2="614" stroke="#a9a9a9"/><line x1="1513.5" y1="611" x2="1513.5" y2="614" stroke="#a9a9a9"/><line x1="1548.5" y1="611" x2="1548.5" y2="617" stroke="#a9a9a9"/><line x1="1584.5" y1="611" x2="1584.5" y2="614" stroke="#a9a9a9"/><line x1="1620.5" y1="611" x2="1620.5" y2="614" stroke="#a9a9a9"/><line x1="1656.5" y1="611" x2="1656.5" y2="614" stroke="#a9a9a9"/><line x1="1692.5" y1="611" x2="1692.5" y2="614" stroke="#a9a9a9"/><line x1="1728.5" y1="611" x2="1728.5" y2="617" stroke="#a9a9a9"/><line x1="1764.5" y1="611" x2="1764.5" y2="614" stroke="#a9a9a9"/></svg><div style="position:absolute;right:1282px;top:606px;font-size:11px;line-height:11px;color:#222;font-weight:normal;white-space:nowrap;text-align:right;">0</div><div style="position:absolute;right:1282px;top:556px;font-size:11px;line-height:11px;color:#222;font-weight:normal;white-space:nowrap;text-align:right;">200</div><div style="position:absolute;right:1282px;top:507px;font-size:11px;line-height:11px;color:#222;font-weight:normal;white-space:nowrap;text-align:right;">400</div><div style="position:absolute;right:1282px;top:457px;font-size:11px;line-height:11px;color:#222;font-weight:normal;white-space:nowrap;text-align:right;">600</div><div style="position:absolute;right:1282px;top:408px;font-size:11px;line-height:11px;color:#222;font-weight:normal;white-space:nowrap;text-align:right;">800</div><div style="position:absolute;right:1282px;top:358px;font-size:11px;line-height:11px;color:#222;font-weight:normal;white-space:nowrap;text-align:right;">1000</div><div style="position:absolute;right:1282px;top:309px;font-size:11px;line-height:11px;color:#222;font-weight:normal;white-space:nowrap;text-align:right;">1200</div><div style="position:absolute;right:1282px;top:259px;font-size:11px;line-height:11px;color:#222;font-weight:normal;white-space:nowrap;text-align:right;">1400</div><div style="position:absolute;right:1282px;top:210px;font-size:11px;line-height:11px;color:#222;font-weight:normal;white-space:nowrap;text-align:right;">1600</div><div style="position:absolute;left:619.5px;top:622px;width:60px;font-size:11px;line-height:11px;color:#222;font-weight:normal;white-space:nowrap;text-align:center;">00:00</div><div style="position:absolute;left:799.3px;top:622px;width:60px;font-size:11px;line-height:11px;color:#222;font-weight:normal;white-space:nowrap;text-align:center;">02:00</div><div style="position:absolute;left:979.1px;top:622px;width:60px;font-size:11px;line-height:11px;color:#222;font-weight:normal;white-space:nowrap;text-align:center;">04:00</div><div style="position:absolute;left:1158.9px;top:622px;width:60px;font-size:11px;line-height:11px;color:#222;font-weight:normal;white-space:nowrap;text-align:center;">06:00</div><div style="position:absolute;left:1338.7px;top:622px;width:60px;font-size:11px;line-height:11px;color:#222;font-weight:normal;white-space:nowrap;text-align:center;">08:00</div><div style="position:absolute;left:1518.5px;top:622px;width:60px;font-size:11px;line-height:11px;color:#222;font-weight:normal;white-space:nowrap;text-align:center;">10:00</div><div style="position:absolute;left:1698.3000000000002px;top:622px;width:60px;font-size:11px;line-height:11px;color:#222;font-weight:normal;white-space:nowrap;text-align:center;">12:00</div><svg style="position:absolute;left:0;top:0" width="1920" height="1080">
<path d="M649.5,581.5 C652.4,581.6 657.8,582.2 666.7,582.3 C675.6,582.4 691.1,582.5 703.0,582.2 C714.9,581.9 728.5,580.6 738.0,580.6 C747.5,580.6 749.7,582.3 760.0,582.4 C770.3,582.5 789.5,581.3 800.0,581.3 C810.5,581.3 812.2,582.3 823.0,582.5 C833.8,582.7 854.3,582.5 865.0,582.3 C875.7,582.0 878.7,581.0 887.0,581.0 C895.3,581.0 905.3,582.2 915.0,582.4 C924.7,582.6 936.4,582.7 945.0,582.4 C953.6,582.1 960.4,580.8 966.7,580.8 C973.0,580.8 974.7,582.1 983.0,582.4 C991.3,582.7 1004.2,582.4 1016.7,582.4 C1029.2,582.4 1046.3,582.5 1058.0,582.2 C1069.7,581.9 1079.7,580.9 1086.7,580.8 C1093.7,580.6 1094.2,580.9 1100.0,581.3 C1105.8,581.7 1114.2,583.4 1121.7,583.4 C1129.2,583.4 1137.5,581.5 1145.0,581.3 C1152.5,581.1 1155.9,582.5 1166.7,582.4 C1177.5,582.3 1199.0,580.8 1210.0,580.6 C1221.0,580.4 1225.2,581.3 1233.0,581.3 C1240.8,581.3 1249.0,580.3 1256.7,580.5 C1264.4,580.7 1272.1,582.5 1279.3,582.5 C1286.5,582.5 1293.3,581.4 1300.0,580.6 C1306.7,579.8 1312.6,579.6 1319.3,577.8 C1326.0,576.0 1335.3,572.3 1340.0,569.6 C1344.7,566.9 1344.4,567.3 1347.4,561.5 C1350.4,555.7 1354.6,543.2 1357.8,534.8 C1361.0,526.4 1363.2,519.5 1366.7,511.1 C1370.2,502.7 1374.3,491.9 1378.5,484.4 C1382.7,476.9 1386.7,469.1 1391.9,465.9 C1397.1,462.6 1404.4,465.6 1409.6,464.9 C1414.8,464.2 1418.5,465.6 1423.0,461.5 C1427.5,457.4 1432.4,451.7 1436.3,440.0 C1440.2,428.3 1442.4,411.6 1446.5,391.2 C1450.6,370.8 1456.7,338.2 1460.8,317.8 C1464.9,297.4 1467.6,282.8 1471.0,268.9 C1474.4,255.0 1478.0,235.7 1481.1,234.3 C1484.1,233.0 1486.9,246.9 1489.3,260.8 C1491.7,274.7 1493.4,295.7 1495.4,317.8 C1497.4,339.9 1499.8,376.3 1501.5,393.3 C1503.2,410.3 1503.9,414.4 1505.6,419.8 C1507.3,425.2 1508.3,426.4 1511.7,425.9 C1515.1,425.4 1520.2,418.5 1526.0,416.7 C1531.8,414.9 1540.7,414.9 1546.4,415.3 C1552.1,415.7 1555.1,417.6 1560.0,419.0 C1564.9,420.4 1570.3,423.2 1576.0,423.5 C1581.7,423.8 1587.7,422.5 1594.4,420.7 C1601.1,418.9 1608.5,413.6 1616.1,412.7 C1623.7,411.8 1632.4,415.2 1640.2,415.5 C1648.0,415.8 1656.4,414.6 1663.1,414.4 C1669.8,414.2 1673.0,415.0 1680.3,414.4 C1687.6,413.8 1699.2,410.9 1706.7,410.7 C1714.2,410.5 1717.2,415.4 1725.0,413.2 C1732.8,410.9 1745.7,399.0 1753.7,397.2 C1761.7,395.4 1769.9,401.4 1773.1,402.3" fill="none" stroke="#5090d0" stroke-width="2.2" stroke-linejoin="round"/>
<line x1="1251.5" y1="193" x2="1251.5" y2="611" stroke="#dd33dd" stroke-width="1"/>
<circle cx="1256.8" cy="580.5" r="7" fill="#5b9bd5"/>
<rect x="1263.5" y="210.5" width="94" height="35" rx="3.5" fill="#fff" stroke="#777" stroke-width="1"/>
<path d="M1276.5,225.5 Q1278.5,222 1281,224.5 L1285.5,230.5 Q1288.5,234 1290,229.5" fill="none" stroke="#5b9bd5" stroke-width="1.2"/>
</svg><div style="position:absolute;left:1293px;top:223px;font-size:11px;line-height:11px;color:#111;font-weight:normal;white-space:nowrap;letter-spacing:0.2px">6:45 : 125</div><div style="position:absolute;left:1804px;top:225px;width:96px;height:86px;background:#ff80ff;"></div><div style="position:absolute;left:1804.0px;top:249px;width:96px;font-size:15px;line-height:15px;color:#fff;font-weight:bold;white-space:nowrap;text-align:center;">最大值</div><div style="position:absolute;left:1804.0px;top:269px;width:96px;font-size:17px;line-height:17px;color:#fff;font-weight:bold;white-space:nowrap;text-align:center;">1522.5</div><div style="position:absolute;left:1804px;top:330px;width:96px;height:86px;background:#8080ff;"></div><div style="position:absolute;left:1804.0px;top:354px;width:96px;font-size:15px;line-height:15px;color:#fff;font-weight:bold;white-space:nowrap;text-align:center;">最小值</div><div style="position:absolute;left:1804.0px;top:374px;width:96px;font-size:17px;line-height:17px;color:#fff;font-weight:bold;white-space:nowrap;text-align:center;">113.5</div><div style="position:absolute;left:1804px;top:439px;width:96px;height:86px;background:#008000;"></div><div style="position:absolute;left:1804.0px;top:463px;width:96px;font-size:15px;line-height:15px;color:#fff;font-weight:bold;white-space:nowrap;text-align:center;">平均值</div><div style="position:absolute;left:1804.0px;top:483px;width:96px;font-size:17px;line-height:17px;color:#fff;font-weight:bold;white-space:nowrap;text-align:center;">363.3</div><div style="position:absolute;left:667px;top:688px;width:1251px;height:389px;box-sizing:border-box;border:1px solid #d6d6d6;"></div><div style="position:absolute;left:674px;top:695px;width:1237px;height:375px;box-sizing:border-box;border:1px solid #a9a9a9;"></div><svg style="position:absolute;left:0;top:0" width="1920" height="1080" shape-rendering="crispEdges"><line x1="730" y1="1003.5" x2="1899" y2="1003.5" stroke="#dcdcdc"/><line x1="730" y1="966.5" x2="1899" y2="966.5" stroke="#dcdcdc"/><line x1="730" y1="928.5" x2="1899" y2="928.5" stroke="#dcdcdc"/><line x1="730" y1="891.5" x2="1899" y2="891.5" stroke="#dcdcdc"/><line x1="730" y1="854.5" x2="1899" y2="854.5" stroke="#dcdcdc"/><line x1="730" y1="817.5" x2="1899" y2="817.5" stroke="#dcdcdc"/><line x1="730" y1="780.5" x2="1899" y2="780.5" stroke="#dcdcdc"/><line x1="730" y1="743.5" x2="1899" y2="743.5" stroke="#dcdcdc"/><rect x="729.5" y="706.5" width="1170" height="334" fill="none" stroke="#a9a9a9"/><line x1="724" y1="1040.5" x2="729" y2="1040.5" stroke="#a9a9a9"/><line x1="726" y1="1027.5" x2="729" y2="1027.5" stroke="#a9a9a9"/><line x1="726" y1="1015.5" x2="729" y2="1015.5" stroke="#a9a9a9"/><line x1="724" y1="1003.5" x2="729" y2="1003.5" stroke="#a9a9a9"/><line x1="726" y1="990.5" x2="729" y2="990.5" stroke="#a9a9a9"/><line x1="726" y1="978.5" x2="729" y2="978.5" stroke="#a9a9a9"/><line x1="724" y1="966.5" x2="729" y2="966.5" stroke="#a9a9a9"/><line x1="726" y1="953.5" x2="729" y2="953.5" stroke="#a9a9a9"/><line x1="726" y1="941.5" x2="729" y2="941.5" stroke="#a9a9a9"/><line x1="724" y1="928.5" x2="729" y2="928.5" stroke="#a9a9a9"/><line x1="726" y1="916.5" x2="729" y2="916.5" stroke="#a9a9a9"/><line x1="726" y1="904.5" x2="729" y2="904.5" stroke="#a9a9a9"/><line x1="724" y1="891.5" x2="729" y2="891.5" stroke="#a9a9a9"/><line x1="726" y1="879.5" x2="729" y2="879.5" stroke="#a9a9a9"/><line x1="726" y1="867.5" x2="729" y2="867.5" stroke="#a9a9a9"/><line x1="724" y1="854.5" x2="729" y2="854.5" stroke="#a9a9a9"/><line x1="726" y1="842.5" x2="729" y2="842.5" stroke="#a9a9a9"/><line x1="726" y1="829.5" x2="729" y2="829.5" stroke="#a9a9a9"/><line x1="724" y1="817.5" x2="729" y2="817.5" stroke="#a9a9a9"/><line x1="726" y1="805.5" x2="729" y2="805.5" stroke="#a9a9a9"/><line x1="726" y1="792.5" x2="729" y2="792.5" stroke="#a9a9a9"/><line x1="724" y1="780.5" x2="729" y2="780.5" stroke="#a9a9a9"/><line x1="726" y1="768.5" x2="729" y2="768.5" stroke="#a9a9a9"/><line x1="726" y1="755.5" x2="729" y2="755.5" stroke="#a9a9a9"/><line x1="724" y1="743.5" x2="729" y2="743.5" stroke="#a9a9a9"/><line x1="726" y1="731.5" x2="729" y2="731.5" stroke="#a9a9a9"/><line x1="726" y1="718.5" x2="729" y2="718.5" stroke="#a9a9a9"/><line x1="724" y1="706.5" x2="729" y2="706.5" stroke="#a9a9a9"/><line x1="729.5" y1="1040" x2="729.5" y2="1043" stroke="#a9a9a9"/><line x1="738.5" y1="1040" x2="738.5" y2="1043" stroke="#a9a9a9"/><line x1="748.5" y1="1040" x2="748.5" y2="1046" stroke="#a9a9a9"/><line x1="757.5" y1="1040" x2="757.5" y2="1043" stroke="#a9a9a9"/><line x1="767.5" y1="1040" x2="767.5" y2="1043" stroke="#a9a9a9"/><line x1="777.5" y1="1040" x2="777.5" y2="1043" stroke="#a9a9a9"/><line x1="786.5" y1="1040" x2="786.5" y2="1043" stroke="#a9a9a9"/><line x1="796.5" y1="1040" x2="796.5" y2="1046" stroke="#a9a9a9"/><line x1="806.5" y1="1040" x2="806.5" y2="1043" stroke="#a9a9a9"/><line x1="815.5" y1="1040" x2="815.5" y2="1043" stroke="#a9a9a9"/><line x1="825.5" y1="1040" x2="825.5" y2="1043" stroke="#a9a9a9"/><line x1="835.5" y1="1040" x2="835.5" y2="1043" stroke="#a9a9a9"/><line x1="844.5" y1="1040" x2="844.5" y2="1046" stroke="#a9a9a9"/><line x1="854.5" y1="1040" x2="854.5" y2="1043" stroke="#a9a9a9"/><line x1="863.5" y1="1040" x2="863.5" y2="1043" stroke="#a9a9a9"/><line x1="873.5" y1="1040" x2="873.5" y2="1043" stroke="#a9a9a9"/><line x1="883.5" y1="1040" x2="883.5" y2="1043" stroke="#a9a9a9"/><line x1="892.5" y1="1040" x2="892.5" y2="1046" stroke="#a9a9a9"/><line x1="902.5" y1="1040" x2="902.5" y2="1043" stroke="#a9a9a9"/><line x1="912.5" y1="1040" x2="912.5" y2="1043" stroke="#a9a9a9"/><line x1="921.5" y1="1040" x2="921.5" y2="1043" stroke="#a9a9a9"/><line x1="931.5" y1="1040" x2="931.5" y2="1043" stroke="#a9a9a9"/><line x1="941.5" y1="1040" x2="941.5" y2="1046" stroke="#a9a9a9"/><line x1="950.5" y1="1040" x2="950.5" y2="1043" stroke="#a9a9a9"/><line x1="960.5" y1="1040" x2="960.5" y2="1043" stroke="#a9a9a9"/><line x1="970.5" y1="1040" x2="970.5" y2="1043" stroke="#a9a9a9"/><line x1="979.5" y1="1040" x2="979.5" y2="1043" stroke="#a9a9a9"/><line x1="989.5" y1="1040" x2="989.5" y2="1046" stroke="#a9a9a9"/><line x1="998.5" y1="1040" x2="998.5" y2="1043" stroke="#a9a9a9"/><line x1="1008.5" y1="1040" x2="1008.5" y2="1043" stroke="#a9a9a9"/><line x1="1018.5" y1="1040" x2="1018.5" y2="1043" stroke="#a9a9a9"/><line x1="1027.5" y1="1040" x2="1027.5" y2="1043" stroke="#a9a9a9"/><line x1="1037.5" y1="1040" x2="1037.5" y2="1046" stroke="#a9a9a9"/><line x1="1047.5" y1="1040" x2="1047.5" y2="1043" stroke="#a9a9a9"/><line x1="1056.5" y1="1040" x2="1056.5" y2="1043" stroke="#a9a9a9"/><line x1="1066.5" y1="1040" x2="1066.5" y2="1043" stroke="#a9a9a9"/><line x1="1076.5" y1="1040" x2="1076.5" y2="1043" stroke="#a9a9a9"/><line x1="1085.5" y1="1040" x2="1085.5" y2="1046" stroke="#a9a9a9"/><line x1="1095.5" y1="1040" x2="1095.5" y2="1043" stroke="#a9a9a9"/><line x1="1104.5" y1="1040" x2="1104.5" y2="1043" stroke="#a9a9a9"/><line x1="1114.5" y1="1040" x2="1114.5" y2="1043" stroke="#a9a9a9"/><line x1="1124.5" y1="1040" x2="1124.5" y2="1043" stroke="#a9a9a9"/><line x1="1133.5" y1="1040" x2="1133.5" y2="1046" stroke="#a9a9a9"/><line x1="1143.5" y1="1040" x2="1143.5" y2="1043" stroke="#a9a9a9"/><line x1="1153.5" y1="1040" x2="1153.5" y2="1043" stroke="#a9a9a9"/><line x1="1162.5" y1="1040" x2="1162.5" y2="1043" stroke="#a9a9a9"/><line x1="1172.5" y1="1040" x2="1172.5" y2="1043" stroke="#a9a9a9"/><line x1="1182.5" y1="1040" x2="1182.5" y2="1046" stroke="#a9a9a9"/><line x1="1191.5" y1="1040" x2="1191.5" y2="1043" stroke="#a9a9a9"/><line x1="1201.5" y1="1040" x2="1201.5" y2="1043" stroke="#a9a9a9"/><line x1="1211.5" y1="1040" x2="1211.5" y2="1043" stroke="#a9a9a9"/><line x1="1220.5" y1="1040" x2="1220.5" y2="1043" stroke="#a9a9a9"/><line x1="1230.5" y1="1040" x2="1230.5" y2="1046" stroke="#a9a9a9"/><line x1="1239.5" y1="1040" x2="1239.5" y2="1043" stroke="#a9a9a9"/><line x1="1249.5" y1="1040" x2="1249.5" y2="1043" stroke="#a9a9a9"/><line x1="1259.5" y1="1040" x2="1259.5" y2="1043" stroke="#a9a9a9"/><line x1="1268.5" y1="1040" x2="1268.5" y2="1043" stroke="#a9a9a9"/><line x1="1278.5" y1="1040" x2="1278.5" y2="1046" stroke="#a9a9a9"/><line x1="1288.5" y1="1040" x2="1288.5" y2="1043" stroke="#a9a9a9"/><line x1="1297.5" y1="1040" x2="1297.5" y2="1043" stroke="#a9a9a9"/><line x1="1307.5" y1="1040" x2="1307.5" y2="1043" stroke="#a9a9a9"/><line x1="1317.5" y1="1040" x2="1317.5" y2="1043" stroke="#a9a9a9"/><line x1="1326.5" y1="1040" x2="1326.5" y2="1046" stroke="#a9a9a9"/><line x1="1336.5" y1="1040" x2="1336.5" y2="1043" stroke="#a9a9a9"/><line x1="1345.5" y1="1040" x2="1345.5" y2="1043" stroke="#a9a9a9"/><line x1="1355.5" y1="1040" x2="1355.5" y2="1043" stroke="#a9a9a9"/><line x1="1365.5" y1="1040" x2="1365.5" y2="1043" stroke="#a9a9a9"/><line x1="1374.5" y1="1040" x2="1374.5" y2="1046" stroke="#a9a9a9"/><line x1="1384.5" y1="1040" x2="1384.5" y2="1043" stroke="#a9a9a9"/><line x1="1394.5" y1="1040" x2="1394.5" y2="1043" stroke="#a9a9a9"/><line x1="1403.5" y1="1040" x2="1403.5" y2="1043" stroke="#a9a9a9"/><line x1="1413.5" y1="1040" x2="1413.5" y2="1043" stroke="#a9a9a9"/><line x1="1423.5" y1="1040" x2="1423.5" y2="1046" stroke="#a9a9a9"/><line x1="1432.5" y1="1040" x2="1432.5" y2="1043" stroke="#a9a9a9"/><line x1="1442.5" y1="1040" x2="1442.5" y2="1043" stroke="#a9a9a9"/><line x1="1452.5" y1="1040" x2="1452.5" y2="1043" stroke="#a9a9a9"/><line x1="1461.5" y1="1040" x2="1461.5" y2="1043" stroke="#a9a9a9"/><line x1="1471.5" y1="1040" x2="1471.5" y2="1046" stroke="#a9a9a9"/><line x1="1480.5" y1="1040" x2="1480.5" y2="1043" stroke="#a9a9a9"/><line x1="1490.5" y1="1040" x2="1490.5" y2="1043" stroke="#a9a9a9"/><line x1="1500.5" y1="1040" x2="1500.5" y2="1043" stroke="#a9a9a9"/><line x1="1509.5" y1="1040" x2="1509.5" y2="1043" stroke="#a9a9a9"/><line x1="1519.5" y1="1040" x2="1519.5" y2="1046" stroke="#a9a9a9"/><line x1="1529.5" y1="1040" x2="1529.5" y2="1043" stroke="#a9a9a9"/><line x1="1538.5" y1="1040" x2="1538.5" y2="1043" stroke="#a9a9a9"/><line x1="1548.5" y1="1040" x2="1548.5" y2="1043" stroke="#a9a9a9"/><line x1="1558.5" y1="1040" x2="1558.5" y2="1043" stroke="#a9a9a9"/><line x1="1567.5" y1="1040" x2="1567.5" y2="1046" stroke="#a9a9a9"/><line x1="1577.5" y1="1040" x2="1577.5" y2="1043" stroke="#a9a9a9"/><line x1="1586.5" y1="1040" x2="1586.5" y2="1043" stroke="#a9a9a9"/><line x1="1596.5" y1="1040" x2="1596.5" y2="1043" stroke="#a9a9a9"/><line x1="1606.5" y1="1040" x2="1606.5" y2="1043" stroke="#a9a9a9"/><line x1="1615.5" y1="1040" x2="1615.5" y2="1046" stroke="#a9a9a9"/><line x1="1625.5" y1="1040" x2="1625.5" y2="1043" stroke="#a9a9a9"/><line x1="1635.5" y1="1040" x2="1635.5" y2="1043" stroke="#a9a9a9"/><line x1="1644.5" y1="1040" x2="1644.5" y2="1043" stroke="#a9a9a9"/><line x1="1654.5" y1="1040" x2="1654.5" y2="1043" stroke="#a9a9a9"/><line x1="1664.5" y1="1040" x2="1664.5" y2="1046" stroke="#a9a9a9"/><line x1="1673.5" y1="1040" x2="1673.5" y2="1043" stroke="#a9a9a9"/><line x1="1683.5" y1="1040" x2="1683.5" y2="1043" stroke="#a9a9a9"/><line x1="1693.5" y1="1040" x2="1693.5" y2="1043" stroke="#a9a9a9"/><line x1="1702.5" y1="1040" x2="1702.5" y2="1043" stroke="#a9a9a9"/><line x1="1712.5" y1="1040" x2="1712.5" y2="1046" stroke="#a9a9a9"/><line x1="1721.5" y1="1040" x2="1721.5" y2="1043" stroke="#a9a9a9"/><line x1="1731.5" y1="1040" x2="1731.5" y2="1043" stroke="#a9a9a9"/><line x1="1741.5" y1="1040" x2="1741.5" y2="1043" stroke="#a9a9a9"/><line x1="1750.5" y1="1040" x2="1750.5" y2="1043" stroke="#a9a9a9"/><line x1="1760.5" y1="1040" x2="1760.5" y2="1046" stroke="#a9a9a9"/><line x1="1770.5" y1="1040" x2="1770.5" y2="1043" stroke="#a9a9a9"/><line x1="1779.5" y1="1040" x2="1779.5" y2="1043" stroke="#a9a9a9"/><line x1="1789.5" y1="1040" x2="1789.5" y2="1043" stroke="#a9a9a9"/><line x1="1799.5" y1="1040" x2="1799.5" y2="1043" stroke="#a9a9a9"/><line x1="1808.5" y1="1040" x2="1808.5" y2="1046" stroke="#a9a9a9"/><line x1="1818.5" y1="1040" x2="1818.5" y2="1043" stroke="#a9a9a9"/><line x1="1827.5" y1="1040" x2="1827.5" y2="1043" stroke="#a9a9a9"/><line x1="1837.5" y1="1040" x2="1837.5" y2="1043" stroke="#a9a9a9"/><line x1="1847.5" y1="1040" x2="1847.5" y2="1043" stroke="#a9a9a9"/><line x1="1856.5" y1="1040" x2="1856.5" y2="1046" stroke="#a9a9a9"/><line x1="1866.5" y1="1040" x2="1866.5" y2="1043" stroke="#a9a9a9"/><line x1="1876.5" y1="1040" x2="1876.5" y2="1043" stroke="#a9a9a9"/><line x1="1885.5" y1="1040" x2="1885.5" y2="1043" stroke="#a9a9a9"/><line x1="1895.5" y1="1040" x2="1895.5" y2="1043" stroke="#a9a9a9"/></svg><div style="position:absolute;right:1202px;top:1034px;font-size:11px;line-height:11px;color:#222;font-weight:normal;white-space:nowrap;text-align:right;">0</div><div style="position:absolute;right:1202px;top:997px;font-size:11px;line-height:11px;color:#222;font-weight:normal;white-space:nowrap;text-align:right;">20000</div><div style="position:absolute;right:1202px;top:960px;font-size:11px;line-height:11px;color:#222;font-weight:normal;white-space:nowrap;text-align:right;">40000</div><div style="position:absolute;right:1202px;top:922px;font-size:11px;line-height:11px;color:#222;font-weight:normal;white-space:nowrap;text-align:right;">60000</div><div style="position:absolute;right:1202px;top:885px;font-size:11px;line-height:11px;color:#222;font-weight:normal;white-space:nowrap;text-align:right;">80000</div><div style="position:absolute;right:1202px;top:848px;font-size:11px;line-height:11px;color:#222;font-weight:normal;white-space:nowrap;text-align:right;">100000</div><div style="position:absolute;right:1202px;top:811px;font-size:11px;line-height:11px;color:#222;font-weight:normal;white-space:nowrap;text-align:right;">120000</div><div style="position:absolute;right:1202px;top:774px;font-size:11px;line-height:11px;color:#222;font-weight:normal;white-space:nowrap;text-align:right;">140000</div><div style="position:absolute;right:1202px;top:737px;font-size:11px;line-height:11px;color:#222;font-weight:normal;white-space:nowrap;text-align:right;">160000</div><div style="position:absolute;left:718.3px;top:1050px;width:60px;font-size:11px;line-height:11px;color:#222;font-weight:normal;white-space:nowrap;text-align:center;">14<span style="color:#8a8a8a">时</span></div><div style="position:absolute;left:766.5px;top:1050px;width:60px;font-size:11px;line-height:11px;color:#222;font-weight:normal;white-space:nowrap;text-align:center;">16<span style="color:#8a8a8a">时</span></div><div style="position:absolute;left:814.6999999999999px;top:1050px;width:60px;font-size:11px;line-height:11px;color:#222;font-weight:normal;white-space:nowrap;text-align:center;">18<span style="color:#8a8a8a">时</span></div><div style="position:absolute;left:862.9px;top:1050px;width:60px;font-size:11px;line-height:11px;color:#222;font-weight:normal;white-space:nowrap;text-align:center;">20<span style="color:#8a8a8a">时</span></div><div style="position:absolute;left:911.0999999999999px;top:1050px;width:60px;font-size:11px;line-height:11px;color:#222;font-weight:normal;white-space:nowrap;text-align:center;">22<span style="color:#8a8a8a">时</span></div><div style="position:absolute;left:959.3px;top:1050px;width:60px;font-size:11px;line-height:11px;color:#222;font-weight:normal;white-space:nowrap;text-align:center;">00<span style="color:#8a8a8a">时</span></div><div style="position:absolute;left:1007.5px;top:1050px;width:60px;font-size:11px;line-height:11px;color:#222;font-weight:normal;white-space:nowrap;text-align:center;">02<span style="color:#8a8a8a">时</span></div><div style="position:absolute;left:1055.7px;top:1050px;width:60px;font-size:11px;line-height:11px;color:#222;font-weight:normal;white-space:nowrap;text-align:center;">04<span style="color:#8a8a8a">时</span></div><div style="position:absolute;left:1103.9px;top:1050px;width:60px;font-size:11px;line-height:11px;color:#222;font-weight:normal;white-space:nowrap;text-align:center;">06<span style="color:#8a8a8a">时</span></div><div style="position:absolute;left:1152.1px;top:1050px;width:60px;font-size:11px;line-height:11px;color:#222;font-weight:normal;white-space:nowrap;text-align:center;">08<span style="color:#8a8a8a">时</span></div><div style="position:absolute;left:1200.3px;top:1050px;width:60px;font-size:11px;line-height:11px;color:#222;font-weight:normal;white-space:nowrap;text-align:center;">10<span style="color:#8a8a8a">时</span></div><div style="position:absolute;left:1248.5px;top:1050px;width:60px;font-size:11px;line-height:11px;color:#222;font-weight:normal;white-space:nowrap;text-align:center;">12<span style="color:#8a8a8a">时</span></div><div style="position:absolute;left:1296.7px;top:1050px;width:60px;font-size:11px;line-height:11px;color:#222;font-weight:normal;white-space:nowrap;text-align:center;">14<span style="color:#8a8a8a">时</span></div><div style="position:absolute;left:1344.9px;top:1050px;width:60px;font-size:11px;line-height:11px;color:#222;font-weight:normal;white-space:nowrap;text-align:center;">16<span style="color:#8a8a8a">时</span></div><div style="position:absolute;left:1393.1px;top:1050px;width:60px;font-size:11px;line-height:11px;color:#222;font-weight:normal;white-space:nowrap;text-align:center;">18<span style="color:#8a8a8a">时</span></div><div style="position:absolute;left:1441.3px;top:1050px;width:60px;font-size:11px;line-height:11px;color:#222;font-weight:normal;white-space:nowrap;text-align:center;">20<span style="color:#8a8a8a">时</span></div><div style="position:absolute;left:1489.5px;top:1050px;width:60px;font-size:11px;line-height:11px;color:#222;font-weight:normal;white-space:nowrap;text-align:center;">22<span style="color:#8a8a8a">时</span></div><div style="position:absolute;left:1537.7px;top:1050px;width:60px;font-size:11px;line-height:11px;color:#222;font-weight:normal;white-space:nowrap;text-align:center;">00<span style="color:#8a8a8a">时</span></div><div style="position:absolute;left:1585.9px;top:1050px;width:60px;font-size:11px;line-height:11px;color:#222;font-weight:normal;white-space:nowrap;text-align:center;">02<span style="color:#8a8a8a">时</span></div><div style="position:absolute;left:1634.1px;top:1050px;width:60px;font-size:11px;line-height:11px;color:#222;font-weight:normal;white-space:nowrap;text-align:center;">04<span style="color:#8a8a8a">时</span></div><div style="position:absolute;left:1682.3px;top:1050px;width:60px;font-size:11px;line-height:11px;color:#222;font-weight:normal;white-space:nowrap;text-align:center;">06<span style="color:#8a8a8a">时</span></div><div style="position:absolute;left:1730.5px;top:1050px;width:60px;font-size:11px;line-height:11px;color:#222;font-weight:normal;white-space:nowrap;text-align:center;">08<span style="color:#8a8a8a">时</span></div><div style="position:absolute;left:1778.7px;top:1050px;width:60px;font-size:11px;line-height:11px;color:#222;font-weight:normal;white-space:nowrap;text-align:center;">10<span style="color:#8a8a8a">时</span></div><div style="position:absolute;left:1826.9px;top:1050px;width:60px;font-size:11px;line-height:11px;color:#222;font-weight:normal;white-space:nowrap;text-align:center;">12<span style="color:#8a8a8a">时</span></div><svg style="position:absolute;left:0;top:0" width="1920" height="1080"><rect x="813.5" y="736.5" width="14" height="304" fill="#4682b4" stroke="#3d74a3" stroke-width="1" shape-rendering="crispEdges"/><rect x="837.5" y="803.5" width="14" height="237" fill="#4682b4" stroke="#3d74a3" stroke-width="1" shape-rendering="crispEdges"/><rect x="861.5" y="819.5" width="14" height="221" fill="#4682b4" stroke="#3d74a3" stroke-width="1" shape-rendering="crispEdges"/><rect x="885.5" y="822.5" width="14" height="218" fill="#4682b4" stroke="#3d74a3" stroke-width="1" shape-rendering="crispEdges"/><rect x="910.5" y="825.5" width="14" height="215" fill="#4682b4" stroke="#3d74a3" stroke-width="1" shape-rendering="crispEdges"/><rect x="934.5" y="826.5" width="14" height="214" fill="#4682b4" stroke="#3d74a3" stroke-width="1" shape-rendering="crispEdges"/><rect x="958.5" y="826.5" width="14" height="214" fill="#4682b4" stroke="#3d74a3" stroke-width="1" shape-rendering="crispEdges"/><rect x="982.5" y="831.5" width="14" height="209" fill="#4682b4" stroke="#3d74a3" stroke-width="1" shape-rendering="crispEdges"/><rect x="1006.5" y="832.5" width="14" height="208" fill="#4682b4" stroke="#3d74a3" stroke-width="1" shape-rendering="crispEdges"/><rect x="1030.5" y="834.5" width="14" height="206" fill="#4682b4" stroke="#3d74a3" stroke-width="1" shape-rendering="crispEdges"/><rect x="1054.5" y="832.5" width="14" height="208" fill="#4682b4" stroke="#3d74a3" stroke-width="1" shape-rendering="crispEdges"/><rect x="1078.5" y="832.5" width="14" height="208" fill="#4682b4" stroke="#3d74a3" stroke-width="1" shape-rendering="crispEdges"/><rect x="1102.5" y="835.5" width="14" height="205" fill="#4682b4" stroke="#3d74a3" stroke-width="1" shape-rendering="crispEdges"/><rect x="1126.5" y="822.5" width="14" height="218" fill="#4682b4" stroke="#3d74a3" stroke-width="1" shape-rendering="crispEdges"/><rect x="1150.5" y="763.5" width="14" height="277" fill="#4682b4" stroke="#3d74a3" stroke-width="1" shape-rendering="crispEdges"/><rect x="1175.5" y="844.5" width="14" height="196" fill="#4682b4" stroke="#3d74a3" stroke-width="1" shape-rendering="crispEdges"/><rect x="1199" y="1038.8" width="15" height="1.4" fill="#3f76a8"/><rect x="1223" y="1038.8" width="15" height="1.4" fill="#3f76a8"/><rect x="1247" y="1038.8" width="15" height="1.4" fill="#3f76a8"/><rect x="1271" y="1038.8" width="15" height="1.4" fill="#3f76a8"/><rect x="1295" y="1038.8" width="15" height="1.4" fill="#3f76a8"/><rect x="1319" y="1038.8" width="15" height="1.4" fill="#3f76a8"/><rect x="1343" y="1038.8" width="15" height="1.4" fill="#3f76a8"/><rect x="1367" y="1038.8" width="15" height="1.4" fill="#3f76a8"/><rect x="1753" y="1038.8" width="15" height="1.4" fill="#3f76a8"/><rect x="1777" y="1038.8" width="15" height="1.4" fill="#3f76a8"/><rect x="1801" y="1038.8" width="15" height="1.4" fill="#3f76a8"/><rect x="1825" y="1038.8" width="15" height="1.4" fill="#3f76a8"/><rect x="1849" y="1038.8" width="15" height="1.4" fill="#3f76a8"/><line x1="821.5" y1="726" x2="821.5" y2="736" stroke="#3a6ea5" stroke-width="1" shape-rendering="crispEdges"/><rect x="800.5" y="710.5" width="41" height="15" fill="#fff" stroke="#3a6ea5" stroke-width="1" shape-rendering="crispEdges"/><text x="820.6" y="722.5" font-size="11" fill="#2d5f93" text-anchor="middle">163456</text><line x1="845.5" y1="793" x2="845.5" y2="803" stroke="#3a6ea5" stroke-width="1" shape-rendering="crispEdges"/><rect x="824.5" y="777.5" width="41" height="15" fill="#fff" stroke="#3a6ea5" stroke-width="1" shape-rendering="crispEdges"/><text x="844.7" y="789.5" font-size="11" fill="#2d5f93" text-anchor="middle">127360</text><line x1="869.5" y1="809" x2="869.5" y2="819" stroke="#3a6ea5" stroke-width="1" shape-rendering="crispEdges"/><rect x="848.5" y="793.5" width="41" height="15" fill="#fff" stroke="#3a6ea5" stroke-width="1" shape-rendering="crispEdges"/><text x="868.8" y="805.5" font-size="11" fill="#2d5f93" text-anchor="middle">118912</text><line x1="917.5" y1="815" x2="917.5" y2="825" stroke="#3a6ea5" stroke-width="1" shape-rendering="crispEdges"/><rect x="896.5" y="799.5" width="41" height="15" fill="#fff" stroke="#3a6ea5" stroke-width="1" shape-rendering="crispEdges"/><text x="917.0" y="811.5" font-size="11" fill="#2d5f93" text-anchor="middle">115968</text><line x1="965.5" y1="816" x2="965.5" y2="826" stroke="#3a6ea5" stroke-width="1" shape-rendering="crispEdges"/><rect x="945.5" y="800.5" width="41" height="15" fill="#fff" stroke="#3a6ea5" stroke-width="1" shape-rendering="crispEdges"/><text x="965.2" y="812.5" font-size="11" fill="#2d5f93" text-anchor="middle">114944</text><line x1="1013.5" y1="822" x2="1013.5" y2="832" stroke="#3a6ea5" stroke-width="1" shape-rendering="crispEdges"/><rect x="993.5" y="806.5" width="41" height="15" fill="#fff" stroke="#3a6ea5" stroke-width="1" shape-rendering="crispEdges"/><text x="1013.4" y="818.5" font-size="11" fill="#2d5f93" text-anchor="middle">111872</text><line x1="1062.5" y1="822" x2="1062.5" y2="832" stroke="#3a6ea5" stroke-width="1" shape-rendering="crispEdges"/><rect x="1041.5" y="806.5" width="41" height="15" fill="#fff" stroke="#3a6ea5" stroke-width="1" shape-rendering="crispEdges"/><text x="1061.6" y="818.5" font-size="11" fill="#2d5f93" text-anchor="middle">111872</text><line x1="1110.5" y1="825" x2="1110.5" y2="835" stroke="#3a6ea5" stroke-width="1" shape-rendering="crispEdges"/><rect x="1089.5" y="809.5" width="41" height="15" fill="#fff" stroke="#3a6ea5" stroke-width="1" shape-rendering="crispEdges"/><text x="1109.8" y="821.5" font-size="11" fill="#2d5f93" text-anchor="middle">110208</text><line x1="1158.5" y1="753" x2="1158.5" y2="763" stroke="#3a6ea5" stroke-width="1" shape-rendering="crispEdges"/><rect x="1137.5" y="737.5" width="41" height="15" fill="#fff" stroke="#3a6ea5" stroke-width="1" shape-rendering="crispEdges"/><text x="1158.0" y="749.5" font-size="11" fill="#2d5f93" text-anchor="middle">148992</text><line x1="1182.5" y1="834" x2="1182.5" y2="844" stroke="#3a6ea5" stroke-width="1" shape-rendering="crispEdges"/><rect x="1161.5" y="818.5" width="41" height="15" fill="#fff" stroke="#3a6ea5" stroke-width="1" shape-rendering="crispEdges"/><text x="1182.1" y="830.5" font-size="11" fill="#2d5f93" text-anchor="middle">105344</text><line x1="1206.5" y1="1030" x2="1206.5" y2="1040" stroke="#3a6ea5" stroke-width="1" shape-rendering="crispEdges"/><rect x="1190.5" y="1014.5" width="32" height="15" fill="#fff" stroke="#3a6ea5" stroke-width="1" shape-rendering="crispEdges"/><text x="1206.2" y="1026.5" font-size="11" fill="#2d5f93" text-anchor="middle">480.3</text><line x1="1254.5" y1="1030" x2="1254.5" y2="1040" stroke="#3a6ea5" stroke-width="1" shape-rendering="crispEdges"/><rect x="1238.5" y="1014.5" width="32" height="15" fill="#fff" stroke="#3a6ea5" stroke-width="1" shape-rendering="crispEdges"/><text x="1254.4" y="1026.5" font-size="11" fill="#2d5f93" text-anchor="middle">605.5</text><line x1="1303.5" y1="1030" x2="1303.5" y2="1040" stroke="#3a6ea5" stroke-width="1" shape-rendering="crispEdges"/><rect x="1287.5" y="1014.5" width="32" height="15" fill="#fff" stroke="#3a6ea5" stroke-width="1" shape-rendering="crispEdges"/><text x="1302.6" y="1026.5" font-size="11" fill="#2d5f93" text-anchor="middle">393.5</text><line x1="1351.5" y1="1030" x2="1351.5" y2="1040" stroke="#3a6ea5" stroke-width="1" shape-rendering="crispEdges"/><rect x="1335.5" y="1014.5" width="32" height="15" fill="#fff" stroke="#3a6ea5" stroke-width="1" shape-rendering="crispEdges"/><text x="1350.8" y="1026.5" font-size="11" fill="#2d5f93" text-anchor="middle">587.6</text><line x1="1399.5" y1="1031" x2="1399.5" y2="1040" stroke="#3a6ea5" stroke-width="1" shape-rendering="crispEdges"/><rect x="1383.5" y="1015.5" width="32" height="15" fill="#fff" stroke="#3a6ea5" stroke-width="1" shape-rendering="crispEdges"/><text x="1399.0" y="1027.5" font-size="11" fill="#2d5f93" text-anchor="middle">160.8</text><line x1="1447.5" y1="1031" x2="1447.5" y2="1040" stroke="#3a6ea5" stroke-width="1" shape-rendering="crispEdges"/><rect x="1431.5" y="1015.5" width="32" height="15" fill="#fff" stroke="#3a6ea5" stroke-width="1" shape-rendering="crispEdges"/><text x="1447.2" y="1027.5" font-size="11" fill="#2d5f93" text-anchor="middle">120.6</text><line x1="1495.5" y1="1031" x2="1495.5" y2="1040" stroke="#3a6ea5" stroke-width="1" shape-rendering="crispEdges"/><rect x="1484.5" y="1015.5" width="23" height="15" fill="#fff" stroke="#3a6ea5" stroke-width="1" shape-rendering="crispEdges"/><text x="1495.4" y="1027.5" font-size="11" fill="#2d5f93" text-anchor="middle">115</text><line x1="1520.5" y1="1031" x2="1520.5" y2="1040" stroke="#3a6ea5" stroke-width="1" shape-rendering="crispEdges"/><rect x="1508.5" y="1015.5" width="23" height="15" fill="#fff" stroke="#3a6ea5" stroke-width="1" shape-rendering="crispEdges"/><text x="1519.5" y="1027.5" font-size="11" fill="#2d5f93" text-anchor="middle">115</text><line x1="1568.5" y1="1031" x2="1568.5" y2="1040" stroke="#3a6ea5" stroke-width="1" shape-rendering="crispEdges"/><rect x="1552.5" y="1015.5" width="32" height="15" fill="#fff" stroke="#3a6ea5" stroke-width="1" shape-rendering="crispEdges"/><text x="1567.7" y="1027.5" font-size="11" fill="#2d5f93" text-anchor="middle">119.3</text><line x1="1616.5" y1="1031" x2="1616.5" y2="1040" stroke="#3a6ea5" stroke-width="1" shape-rendering="crispEdges"/><rect x="1600.5" y="1015.5" width="32" height="15" fill="#fff" stroke="#3a6ea5" stroke-width="1" shape-rendering="crispEdges"/><text x="1615.9" y="1027.5" font-size="11" fill="#2d5f93" text-anchor="middle">118.6</text><line x1="1664.5" y1="1031" x2="1664.5" y2="1040" stroke="#3a6ea5" stroke-width="1" shape-rendering="crispEdges"/><rect x="1648.5" y="1015.5" width="32" height="15" fill="#fff" stroke="#3a6ea5" stroke-width="1" shape-rendering="crispEdges"/><text x="1664.1" y="1027.5" font-size="11" fill="#2d5f93" text-anchor="middle">118.5</text><line x1="1712.5" y1="1031" x2="1712.5" y2="1040" stroke="#3a6ea5" stroke-width="1" shape-rendering="crispEdges"/><rect x="1696.5" y="1015.5" width="32" height="15" fill="#fff" stroke="#3a6ea5" stroke-width="1" shape-rendering="crispEdges"/><text x="1712.3" y="1027.5" font-size="11" fill="#2d5f93" text-anchor="middle">122.5</text><line x1="1760.5" y1="1030" x2="1760.5" y2="1040" stroke="#3a6ea5" stroke-width="1" shape-rendering="crispEdges"/><rect x="1744.5" y="1014.5" width="32" height="15" fill="#fff" stroke="#3a6ea5" stroke-width="1" shape-rendering="crispEdges"/><text x="1760.5" y="1026.5" font-size="11" fill="#2d5f93" text-anchor="middle">579.1</text><line x1="1809.5" y1="1030" x2="1809.5" y2="1040" stroke="#3a6ea5" stroke-width="1" shape-rendering="crispEdges"/><rect x="1793.5" y="1014.5" width="32" height="15" fill="#fff" stroke="#3a6ea5" stroke-width="1" shape-rendering="crispEdges"/><text x="1808.7" y="1026.5" font-size="11" fill="#2d5f93" text-anchor="middle">780.6</text><line x1="1857.5" y1="1030" x2="1857.5" y2="1040" stroke="#3a6ea5" stroke-width="1" shape-rendering="crispEdges"/><rect x="1841.5" y="1014.5" width="32" height="15" fill="#fff" stroke="#3a6ea5" stroke-width="1" shape-rendering="crispEdges"/><text x="1856.9" y="1026.5" font-size="11" fill="#2d5f93" text-anchor="middle">627.5</text></svg>
</body></html>
